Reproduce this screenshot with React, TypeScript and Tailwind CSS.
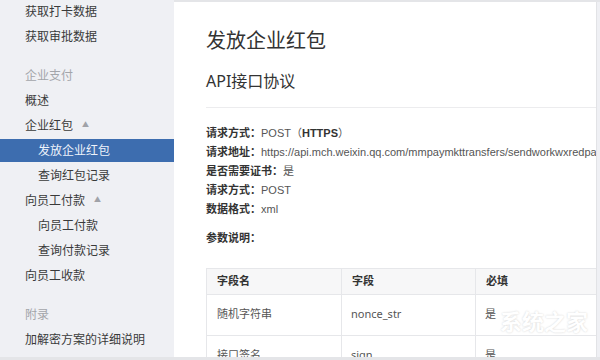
import React from 'react'

const font = { fontFamily: '"Noto Sans", "Noto Sans CJK SC", sans-serif' }
const latin = { fontFamily: '"Liberation Sans", "Noto Sans CJK SC", sans-serif' }

type NavItem = { label: string; kind: 'item' | 'sub' | 'group' | 'active'; caret?: boolean }

const NAV: NavItem[] = [
  { label: '获取打卡数据', kind: 'item' },
  { label: '获取审批数据', kind: 'item' },
  { label: '企业支付', kind: 'group' },
  { label: '概述', kind: 'item' },
  { label: '企业红包', kind: 'item', caret: true },
  { label: '发放企业红包', kind: 'active' },
  { label: '查询红包记录', kind: 'sub' },
  { label: '向员工付款', kind: 'item', caret: true },
  { label: '向员工付款', kind: 'sub' },
  { label: '查询付款记录', kind: 'sub' },
  { label: '向员工收款', kind: 'item' },
  { label: '附录', kind: 'group' },
  { label: '加解密方案的详细说明', kind: 'item' },
]

function Sidebar() {
  return (
    <aside className="w-[174px] shrink-0 bg-[#eff0f4] -mt-[3px]">
      {NAV.map((n, i) => {
        if (n.kind === 'group') {
          return (
            <div className="mt-[14px] flex h-[25px] items-center pl-[25px] text-[12px] text-[#a3a5aa]" key={i}>
              {n.label}
            </div>
          )
        }
        if (n.kind === 'active') {
          return (
            <div className="my-[1px] flex h-[23px] items-center bg-[#3d6daf] pl-[38px] text-[12px] text-[#eef3fb]" key={i}>
              {n.label}
            </div>
          )
        }
        return (
          <div
            className={`flex h-[25px] items-center text-[12px] text-[#3a3a3a] ${n.kind === 'sub' ? 'pl-[38px]' : 'pl-[25px]'}`}
            key={i}
          >
            <span>{n.label}</span>
            {n.caret && <span className="ml-[9px] text-[7px] text-[#a0a2a8]">▲</span>}
          </div>
        )
      })}
    </aside>
  )
}

function InfoLine({ label, children }: { label: string; children: React.ReactNode }) {
  return (
    <div className="flex h-[19px] items-center whitespace-nowrap text-[11px] text-[#555]">
      <span className="font-bold text-[#333]">{label}：</span>
      <span style={latin}>{children}</span>
    </div>
  )
}

function ParamTable() {
  const rows = [
    ['随机字符串', 'nonce_str', '是'],
    ['接口签名', 'sign', '是'],
  ]
  return (
    <table className="mt-[21px] w-[400px] table-fixed border-collapse text-[11px] text-[#555]">
      <colgroup>
        <col className="w-[135px]" />
        <col className="w-[134px]" />
        <col />
      </colgroup>
      <thead>
        <tr className="h-[26px] bg-[#f7f7f8]">
          {['字段名', '字段', '必填'].map((h) => (
            <th className="border border-[#e6e7ea] pl-[10px] text-left font-bold text-[#333]" key={h}>
              {h}
            </th>
          ))}
        </tr>
      </thead>
      <tbody>
        {rows.map((r) => (
          <tr className="h-[41px]" key={r[1]}>
            {r.map((c, j) => (
              <td className={`border border-[#e6e7ea] ${j === 0 ? 'pl-[10px]' : 'pl-[9px]'}`} key={j}>
                {c}
              </td>
            ))}
          </tr>
        ))}
      </tbody>
    </table>
  )
}

export default function App() {
  return (
    <div className="relative flex h-[360px] w-[600px] flex-col overflow-hidden bg-[#eff0f4]" style={font}>
      <div className="h-[2px] shrink-0 bg-[#e4e5e8]" />
      <div className="flex min-h-0 flex-1">
        <Sidebar />
        <main className="mr-[3px] min-w-0 flex-1 overflow-hidden border-r border-[#e2e3e6] bg-white pl-[32px]">
          <h1 className="mt-[24px] h-[30px] text-[20px] leading-[30px] text-[#333]">发放企业红包</h1>
          <h2 className="mt-[13px] h-[24px] text-[16px] leading-[24px] text-[#333]">API接口协议</h2>
          <div className="mt-[14px] h-px bg-[#ececee]" />
          <div className="mt-[16px] flex flex-col">
            <InfoLine label="请求方式">
              POST（<b className="font-bold text-[#333]">HTTPS</b>）
            </InfoLine>
            <InfoLine label="请求地址">https://api.mch.weixin.qq.com/mmpaymkttransfers/sendworkwxredpack</InfoLine>
            <InfoLine label="是否需要证书">是</InfoLine>
            <InfoLine label="请求方式">POST</InfoLine>
            <InfoLine label="数据格式">xml</InfoLine>
          </div>
          <div className="mt-[11px] text-[11px] font-bold text-[#333]">参数说明：</div>
          <ParamTable />
        </main>
      </div>
      <div className="h-[3px] shrink-0 bg-[#e4e5e8]" />
      <div
        className="pointer-events-none absolute right-[12px] bottom-[22px] text-[22px] font-bold text-white"
        style={{ textShadow: '0 0 2px rgba(0,0,0,0.18)' }}
      >
        系统之家
      </div>
    </div>
  )
}
